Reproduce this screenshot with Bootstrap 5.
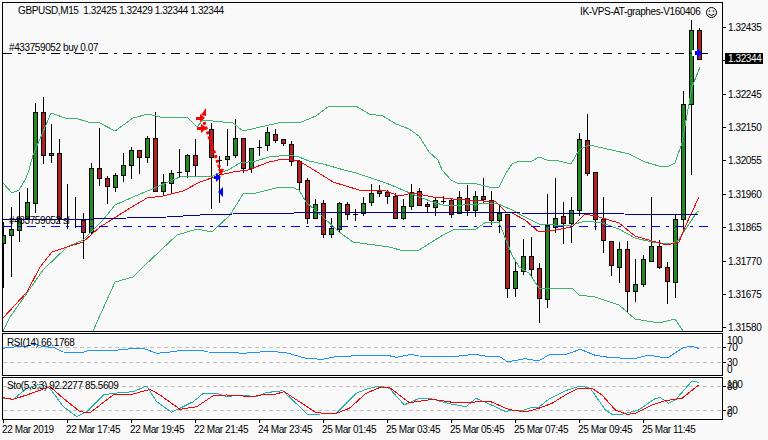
<!DOCTYPE html>
<html lang="en">
<head>
    <meta charset="UTF-8">
    <title>GBPUSD,M15</title>
    <link href="https://cdn.jsdelivr.net/npm/bootstrap@5.3.0/dist/css/bootstrap.min.css" rel="stylesheet">
    <style>
        body { background: #f9f9f9; overflow: hidden; }
        .chart { width: 768px; height: 440px; font: 10px/1 "Liberation Sans", Arial, sans-serif; letter-spacing: -.4px; color: #000; }
        .chart svg { display: block; width: 768px; }
        .chart svg text { font: 10px "Liberation Sans", Arial, sans-serif; letter-spacing: -.4px; fill: #000; }
        .chart svg text.tag { fill: #fff; }
        #main { height: 333px; }
        #rsi { height: 44px; }
        #sto { height: 47px; }
        .time-axis { padding-left: 2px; padding-top: 1px; }
        .time-axis span { width: 64px; white-space: nowrap; }
    </style>
</head>
<body class="m-0">
    <div class="chart d-flex flex-column">
        <svg id="main" viewBox="0 0 768 333"></svg>
        <svg id="rsi" viewBox="0 333 768 44"></svg>
        <svg id="sto" viewBox="0 377 768 47"></svg>
        <div class="time-axis d-flex">
            <span>22 Mar 2019</span>
            <span>22 Mar 17:45</span>
            <span>22 Mar 19:45</span>
            <span>22 Mar 21:45</span>
            <span>24 Mar 23:45</span>
            <span>25 Mar 01:45</span>
            <span>25 Mar 03:45</span>
            <span>25 Mar 05:45</span>
            <span>25 Mar 07:45</span>
            <span>25 Mar 09:45</span>
            <span>25 Mar 11:45</span>
        </div>
    </div>

    <script>
        // candles: [index, open-side top, bottom, wick top, wick bottom, colour] g green, r red, d doji
        var candles = [
            [0,235,243,222,287,'g'],[1,229,235,207,276,'g'],[2,218,230,192,241,'g'],[3,202,218,188,218,'g'],
            [4,112,203,103,212,'g'],[5,112,155,97,163,'r'],[6,153,155,124,162,'g'],[7,153,218,139,222,'r'],
            [8,219,219,184,228,'d'],[9,219,219,197,227,'d'],[10,220,232,213,258,'r'],[11,168,232,163,233,'g'],
            [12,168,178,128,185,'r'],[13,178,186,176,203,'r'],[14,175,187,173,191,'g'],[15,165,175,153,181,'g'],
            [16,150,165,147,178,'g'],[17,150,157,150,173,'r'],[18,138,157,136,162,'g'],[19,138,191,112,191,'r'],
            [20,182,191,174,195,'g'],[21,173,183,170,193,'g'],[22,172,172,149,176,'d'],[23,155,171,154,177,'g'],
            [24,155,165,139,175,'r'],[26,129,157,123,208,'r'],[27,160,160,156,202,'d'],[28,156,159,129,165,'g'],
            [29,138,155,119,157,'g'],[30,138,168,138,172,'r'],[31,148,168,148,172,'g'],[32,147,147,140,155,'d'],
            [33,132,145,127,150,'g'],[34,134,140,129,142,'r'],[35,139,143,139,145,'r'],[36,144,161,141,165,'r'],
            [37,161,182,160,190,'r'],[38,180,218,178,223,'r'],[39,204,218,199,218,'g'],[40,203,234,200,237,'r'],
            [41,228,234,218,237,'g'],[42,203,229,202,232,'g'],[43,204,214,202,219,'r'],[44,214,214,209,220,'d'],
            [45,203,213,197,215,'g'],[46,193,202,184,205,'g'],[47,191,193,185,196,'g'],[48,192,196,190,203,'r'],
            [49,196,218,193,218,'r'],[50,206,218,199,219,'g'],[51,192,206,184,209,'g'],[52,191,205,188,205,'r'],
            [53,204,206,202,211,'r'],[54,200,207,198,215,'g'],[55,201,201,196,203,'d'],[56,200,214,198,217,'r'],
            [57,197,213,191,213,'g'],[58,198,210,185,215,'r'],[59,196,210,191,216,'g'],[60,196,199,178,203,'r'],
            [61,200,220,191,224,'r'],[62,213,220,206,232,'g'],[63,214,288,214,297,'r'],[64,271,288,262,296,'g'],
            [65,256,271,239,274,'g'],[66,256,269,237,276,'r'],[67,268,298,263,322,'r'],[68,225,299,194,307,'g'],
            [69,218,227,178,232,'g'],[70,216,223,202,243,'r'],[71,210,223,197,242,'g'],[72,139,210,133,215,'g'],
            [73,140,173,114,175,'r'],[74,172,219,172,229,'r'],[75,219,240,197,252,'r'],[76,241,265,241,275,'r'],
            [77,249,267,242,282,'g'],[78,249,291,241,311,'r'],[79,284,291,259,301,'g'],[80,259,284,255,286,'g'],
            [81,246,261,197,261,'g'],[82,246,267,240,268,'r'],[83,267,281,262,303,'r'],[84,219,282,214,297,'g'],
            [85,104,219,91,230,'g'],[86,30,104,20,174,'g'],[87,30,59,28,59,'r']
        ];
        var upper = [3,183,12,193,19,190,26,178,29,170,33,155,43,132,51,113,68,119,75,118,88,122,100,123,115,131,133,118,148,114,160,117,180,118,187,117,197,127,203,120,233,123,243,131,256,128,269,125,283,122,299,123,316,116,329,106,356,106,369,114,383,116,396,124,409,129,419,136,429,152,438,160,442,170,451,180,459,184,473,183,489,187,499,187,506,173,512,164,519,161,532,161,539,157,547,160,559,161,571,164,579,150,589,145,612,150,629,154,645,162,659,166,669,166,675,163,682,143,692,87,700,67];
        var middle = [3,331,10,317,27,293,43,270,67,247,83,240,103,220,115,205,133,197,157,187,182,176,213,176,222,172,228,170,240,163,256,161,269,157,289,155,299,157,309,161,323,164,344,170,356,173,386,183,396,187,419,197,433,202,446,206,463,205,496,203,512,210,525,217,539,224,555,225,572,225,585,221,602,223,619,229,635,238,652,242,669,244,677,242,685,230,697,212,699,211];
        var lower = [93,331,115,282,133,277,143,267,177,235,197,229,212,232,230,215,243,194,256,193,276,188,291,187,299,190,306,202,323,217,339,232,353,242,389,247,404,251,419,250,443,235,453,230,476,229,486,222,499,222,506,240,512,255,519,267,529,273,539,288,572,288,579,295,595,297,619,305,635,319,659,323,675,319,683,331];
        var maRed = [3,318,27,292,40,267,52,252,67,247,83,242,100,227,127,210,147,198,163,196,183,191,200,182,220,175,233,172,248,170,256,167,269,162,283,159,299,161,314,170,333,182,359,190,386,191,399,196,413,193,433,197,453,199,469,200,496,202,506,212,512,213,525,220,539,232,555,230,572,227,585,214,599,217,619,223,635,236,652,241,667,245,679,242,685,227,699,197];
        var maNavy = [3,219,93,219,127,218,167,217,200,215,233,214,263,213,294,213,295,212,512,212,520,213,624,214,664,215,699,214];

        // sub window lines are read off in 3x crop units: x/3+offset, y/3+330
        function crop(off, a) {
            var out = [];
            for (var i = 0; i < a.length; i += 2) { out.push(a[i] / 3 + off, a[i + 1] / 3 + 330); }
            return out;
        }
        var rsiLine = crop(0, [8,55,50,50,75,50,105,42,130,50,160,52,190,66,250,67,270,60,355,60,360,58,430,55,470,70,510,66,540,62,600,60,625,66,690,67,730,70])
            .concat(crop(256, [0,67,40,64,90,68,150,85,200,88,240,80,330,76,395,76,420,82,465,73,490,78,590,80,655,73,700,80,730,79,755,96]))
            .concat(crop(512, [0,93,40,86,80,93,110,75,165,72,205,58,250,76,290,82,340,85,370,85,410,75,450,82,470,82,510,55,535,48,560,55]));
        var stoMain = crop(0, [8,205,40,208,80,175,120,162,150,175,190,230,230,260,260,245,310,195,340,190,400,185,440,168,470,215,515,247,580,215,610,190,650,190,680,200,720,195])
            .concat(crop(256, [0,200,30,188,80,182,155,253,195,252,240,250,300,190,330,178,370,168,400,175,445,225,490,205,520,205,585,222,630,230,660,205,700,222,750,245]))
            .concat(crop(512, [0,240,30,242,60,232,80,232,110,208,160,182,205,168,235,175,280,240,300,253,330,253,380,240,430,205,445,203,470,220,490,210,540,153,560,157]));
        var stoSignal = crop(0, [8,203,40,208,80,195,150,170,190,205,240,245,270,248,300,225,340,195,400,192,450,178,480,195,540,238,590,230,640,197,680,195,730,198])
            .concat(crop(256, [0,198,30,192,60,192,85,185,130,215,180,248,235,252,280,235,330,190,370,173,400,172,460,218,530,208,590,217,630,218,700,213,750,235]))
            .concat(crop(512, [0,240,40,246,80,235,120,220,160,195,200,175,240,175,270,195,310,240,345,253,370,250,420,225,460,212,510,205,560,165]));

        function poly(pts, col, w) {
            return '<polyline fill="none" stroke="' + col + '" stroke-width="' + (w || 1) + '" shape-rendering="crispEdges" points="' + pts.join(' ') + '"/>';
        }
        function hline(x1, x2, y, col, dash) {
            return '<line x1="' + x1 + '" x2="' + x2 + '" y1="' + (y + .5) + '" y2="' + (y + .5) + '" stroke="' + col + '" shape-rendering="crispEdges"' + (dash ? ' stroke-dasharray="' + dash + '"' : '') + '/>';
        }
        function vline(x, y1, y2, col) {
            return '<line x1="' + (x + .5) + '" x2="' + (x + .5) + '" y1="' + y1 + '" y2="' + y2 + '" stroke="' + col + '" shape-rendering="crispEdges"/>';
        }
        function label(x, y, s, cls) {
            return '<text x="' + x + '" y="' + y + '"' + (cls ? ' class="' + cls + '"' : '') + '>' + s + '</text>';
        }
        function tri(pts, col) {
            return '<polygon points="' + pts + '" fill="' + col + '"/>';
        }

        var DASHDOT = '9 6 3 6';
        var m = '<clipPath id="plot"><rect x="3" y="3" width="719" height="328"/></clipPath><g clip-path="url(#plot)">';
        candles.forEach(function (c) {
            var x = 3 + 8 * c[0];
            m += vline(x, c[3], c[4] + 1, '#000');
            if (c[5] == 'd') {
                m += hline(x - 2, x + 3, c[1], '#000');
            } else {
                m += '<rect x="' + (x - 1.5) + '" y="' + (c[1] + .5) + '" width="4" height="' + (c[2] - c[1]) + '" stroke="#000" shape-rendering="crispEdges" fill="' + (c[5] == 'g' ? '#228b22' : '#b22222') + '"/>';
            }
        });
        m += poly(upper, '#3cb371') + poly(middle, '#3cb371') + poly(lower, '#3cb371');
        m += poly(maRed, '#f00') + poly(maNavy, '#00008b');
        m += hline(3, 712, 53, '#000', DASHDOT) + hline(3, 712, 226, '#00f', DASHDOT);
        // trade markers
        m += '<line x1="204" y1="122" x2="221" y2="172" stroke="#f00" stroke-width="3" stroke-dasharray="3 2"/>';
        m += tri('206,108 206,116 201,115', '#f00') + tri('196,117 200,117 200,114 205,118 200,122 200,120 196,120', '#f00');
        m += tri('197,127 201,127 201,124 207,128 201,133 201,130 197,130', '#f00') + tri('218,169 224,169 221,176', '#f00');
        m += tri('214,176 216,176 216,173 221,177 216,182 216,179 214,179', '#00f') + tri('223,187 223,197 218,192', '#00f');
        m += '<rect x="692" y="50" width="4" height="6" fill="#fff"/>' + tri('695,51 697,51 697,48 702,53 697,58 697,55 695,55', '#00f');
        m += '</g>';
        // frame, price axis
        m += hline(2, 722, 2, '#000') + hline(2, 722, 331, '#000') + vline(2, 2, 332, '#000') + vline(722, 2, 332, '#000');
        [[27,'1.32435'],[94,'1.32245'],[127,'1.32150'],[160,'1.32055'],[194,'1.31960'],[227,'1.31865'],[261,'1.31770'],[294,'1.31675'],[327,'1.31580']].forEach(function (p) {
            m += hline(722, 726, p[0], '#000') + label(728, p[0] + 4, p[1]);
        });
        m += hline(722, 726, 60, '#000');
        m += '<rect x="725" y="53" width="38" height="11" fill="#000"/>' + label(728, 62, '1.32344', 'tag');
        // texts
        m += label(18, 14, 'GBPUSD,M15&nbsp; 1.32425 1.32429 1.32344 1.32344');
        m += label(9, 51, '#433759052 buy 0.07') + label(9, 224, '#433759052 sl');
        m += label(580, 15, 'IK-VPS-AT-graphes-V160406');
        m += '<circle cx="711.5" cy="12.5" r="5" fill="none" stroke="#000"/><circle cx="709.5" cy="11" r=".8"/><circle cx="713.5" cy="11" r=".8"/><path d="M708.5 14q3 3 6 0" fill="none" stroke="#000"/>';
        document.getElementById('main').innerHTML = m;

        var r = hline(2, 722, 333, '#000') + hline(2, 722, 375, '#000') + vline(2, 333, 376, '#000') + vline(722, 333, 376, '#000');
        r += hline(3, 722, 347, '#c0c0c0', '4 3') + hline(3, 722, 362, '#c0c0c0', '4 3');
        r += poly(rsiLine, '#1e90ff');
        r += label(7, 346, 'RSI(14) 66.1768');
        r += hline(722, 726, 347, '#000') + hline(722, 726, 362, '#000');
        r += label(727, 344, '100') + label(727, 351, '70') + label(727, 366, '30') + label(727, 373, '0');
        document.getElementById('rsi').innerHTML = r;

        var s = hline(2, 722, 377, '#000') + hline(2, 722, 419, '#000') + vline(2, 377, 420, '#000') + vline(722, 377, 420, '#000');
        s += hline(3, 722, 386, '#c0c0c0', '4 3') + hline(3, 722, 410, '#c0c0c0', '4 3');
        s += poly(stoMain, '#20b2aa') + poly(stoSignal, '#f00');
        s += label(7, 389, 'Sto(5,3,3) 92.2277 85.5609');
        s += hline(722, 726, 386, '#000') + hline(722, 726, 410, '#000');
        s += label(727, 388, '100') + label(727, 390, '80') + label(727, 414, '20') + label(727, 417, '0');
        for (var i = 0; i < 11; i++) { s += vline(3 + 64 * i, 419, 423, '#000'); }
        document.getElementById('sto').innerHTML = s;
    </script>
    <script src="https://cdn.jsdelivr.net/npm/bootstrap@5.3.0/dist/js/bootstrap.bundle.min.js"></script>
</body>
</html>
